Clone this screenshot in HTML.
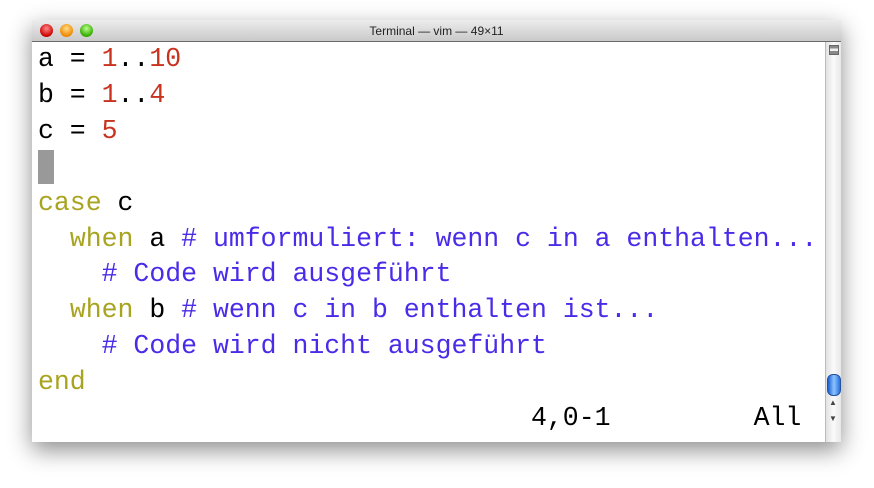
<!DOCTYPE html>
<html><head><meta charset="utf-8"><style>
body{margin:0;width:874px;height:488px;background:#fff;position:relative;overflow:hidden;font-family:"Liberation Sans",sans-serif}
.win{position:absolute;left:32px;top:20px;width:809px;height:422px;box-shadow:0 8px 22px rgba(0,0,0,.45);background:#fff}
.tb{height:21px;background:linear-gradient(#ececec,#c9c9c9);border-bottom:1px solid #6a6a6a;text-align:center;font-size:12px;line-height:22px;color:#222;position:relative}
.dot{position:absolute;top:4px;width:13px;height:13px;border-radius:50%}
.sb{position:absolute;right:0;top:22px;width:15px;bottom:0;background:linear-gradient(90deg,#e2e2e2,#fafafa 50%,#e8e8e8);border-left:1px solid #bbb}
pre{position:absolute;left:6px;top:22px;margin:0;font-family:"Liberation Mono",monospace;font-size:26.5px;line-height:35.9px;color:#000}
.n{color:#c8321e}.k{color:#a8a420}.c{color:#4a2ce8}
.cur{display:inline-block;width:15.9px;height:34px;background:#999;vertical-align:top}
</style></head><body>
<div class="win">
<div class="tb">Terminal — vim — 49×11
<div class="dot" style="left:8px;background:radial-gradient(circle at 50% 35%,#f88,#c00 70%)"></div>
<div class="dot" style="left:28px;background:radial-gradient(circle at 50% 35%,#fd8,#e80 70%)"></div>
<div class="dot" style="left:48px;background:radial-gradient(circle at 50% 35%,#bf8,#3a0 70%)"></div>
</div>
<pre>a = <span class="n">1</span>..<span class="n">10</span>
b = <span class="n">1</span>..<span class="n">4</span>
c = <span class="n">5</span>
<span class="cur"></span>
<span class="k">case</span> c
  <span class="k">when</span> a <span class="c"># umformuliert: wenn c in a enthalten...</span>
    <span class="c"># Code wird ausgeführt</span>
  <span class="k">when</span> b <span class="c"># wenn c in b enthalten ist...</span>
    <span class="c"># Code wird nicht ausgeführt</span>
<span class="k">end</span>
                               4,0-1         All</pre>
<div class="sb">
<div style="position:absolute;left:3px;top:3px;width:8px;height:8px;border:1px solid #666;background:linear-gradient(#888 0 30%,#eee 30% 60%,#888 60%)"></div>
<div style="position:absolute;left:1px;top:332px;width:12px;height:20px;border-radius:6px;background:linear-gradient(90deg,#1a5fd0,#8cc4ff,#2a70e0);border:1px solid #2450a0"></div>
<div style="position:absolute;left:3px;top:356px;font-size:8px;color:#444">▲</div>
<div style="position:absolute;left:3px;top:372px;font-size:8px;color:#444">▼</div>
</div>
</div>
</body></html>
